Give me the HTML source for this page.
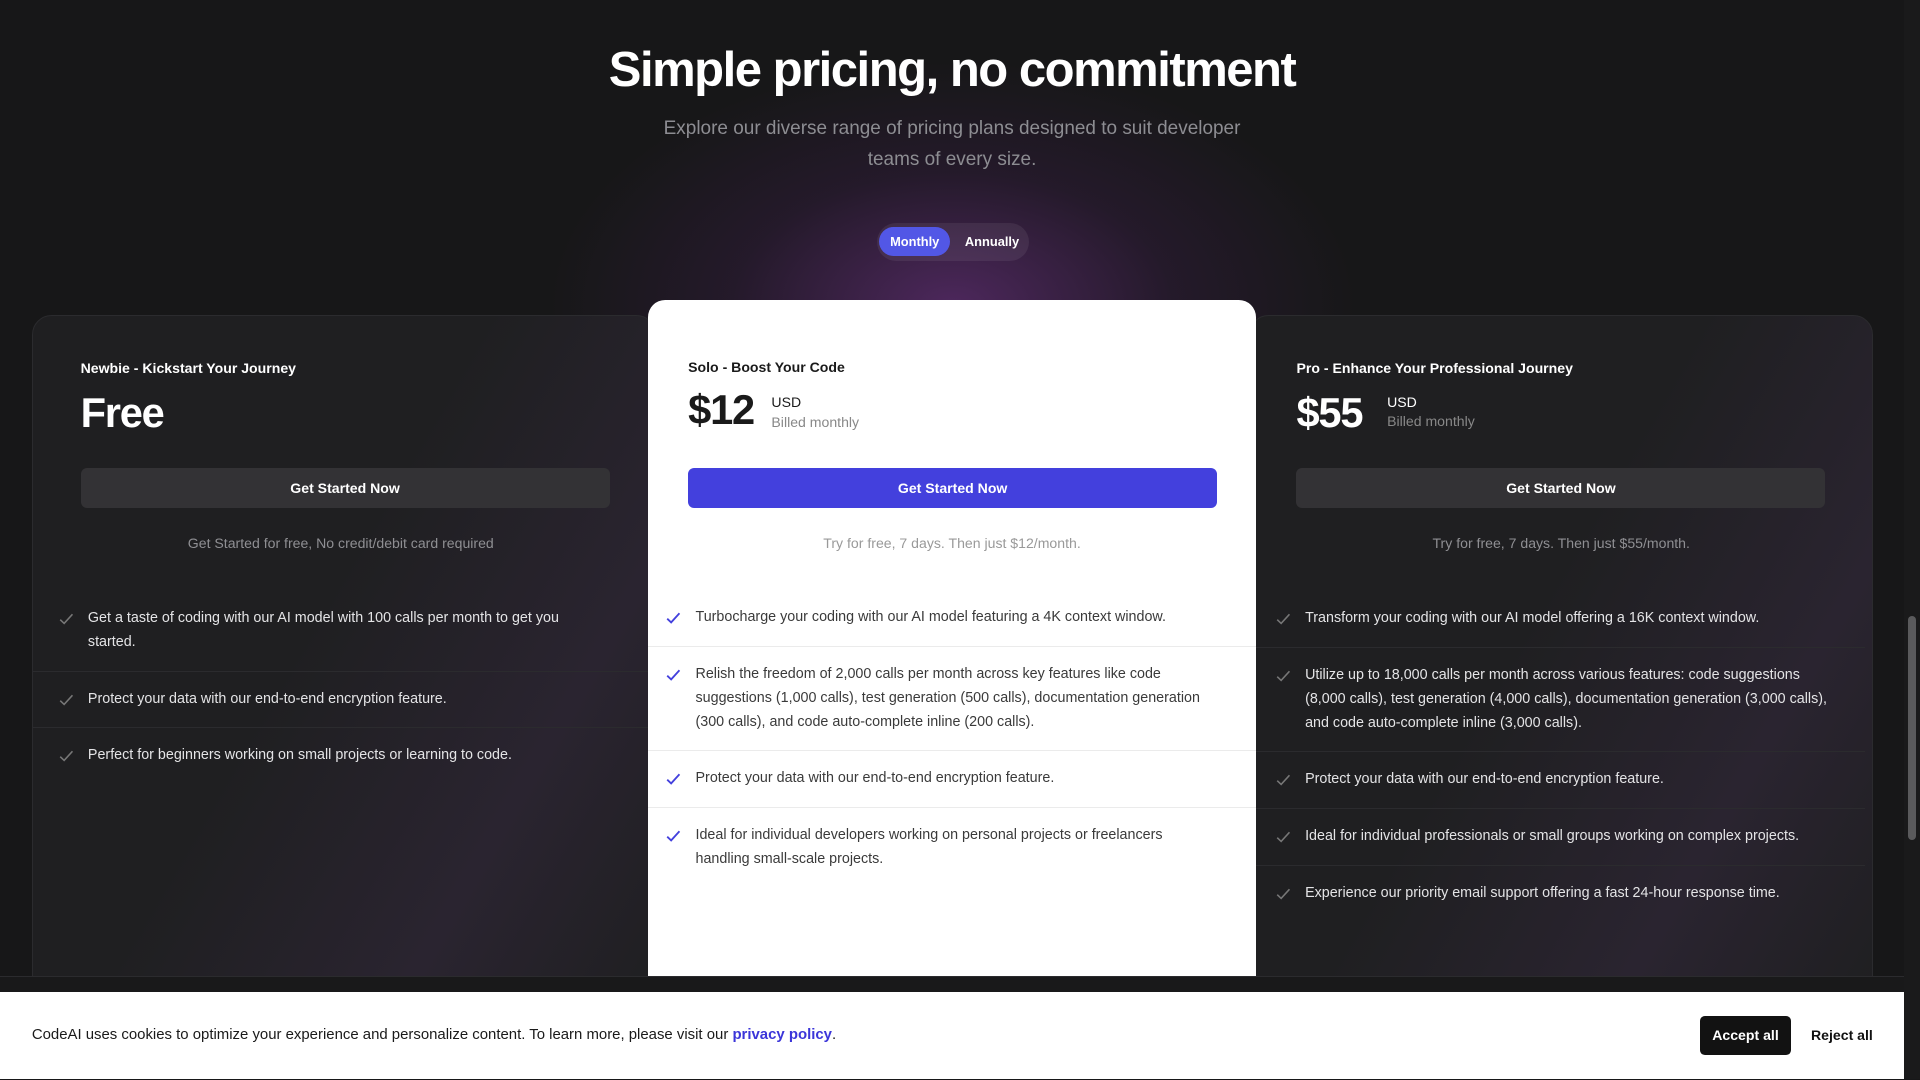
<!DOCTYPE html>
<html><head><meta charset="utf-8"><style>
*{box-sizing:border-box;margin:0;padding:0}
html,body{width:1920px;height:1080px;overflow:hidden;background:#171718}
#w{zoom:1.22449;width:1568px;height:881px;position:relative;font-family:"Liberation Sans",sans-serif;overflow:hidden;
background:radial-gradient(ellipse 330px 200px at 778px 250px,rgba(95,45,115,.75),rgba(60,30,75,.35) 55%,rgba(23,23,24,0) 100%),#171718}
h1{position:absolute;top:34px;left:0;width:1555px;text-align:center;color:#fff;font-size:40px;font-weight:700;letter-spacing:-1.2px}
.sub{position:absolute;top:92px;left:0;width:1555px;text-align:center;color:#8d8d92;font-size:15.5px;line-height:26px}
.tog{position:absolute;left:716px;top:182px;width:124px;height:31px;border-radius:16px;background:rgba(255,255,255,.07)}
.tog .m{position:absolute;left:2px;top:3px;width:58px;height:24px;border-radius:12px;background:#5257e6;color:#fff;font-size:10.5px;font-weight:700;text-align:center;line-height:24px}
.tog .a{position:absolute;left:72px;top:3px;color:#fff;font-size:10.5px;font-weight:700;line-height:24px}
.card{position:absolute;border-radius:16px;overflow:hidden}
.dark{background:linear-gradient(120deg,#1f1f21 0%,#1f1f21 45%,#2a2430 75%,#1f1f21 100%);border:1px solid #2b2b2e;top:257px;height:560px;color:#fff}
.white{background:#fff;top:245px;left:529px;width:497px;height:600px;color:#1a1a1a;border-radius:14px}
.pn{position:absolute;top:36px;left:36px;font-size:11.5px;font-weight:700}
.white .pn{top:48px;left:33px}
.price{position:absolute;left:36px;top:60px;font-size:34px;font-weight:700;letter-spacing:-1px}
.white .price{left:33px;top:70px}
.usd{position:absolute;left:101px;top:63px;font-size:11.5px;line-height:16px}
.usd span{color:#888}
.white .usd{top:76px}
.btn{position:absolute;left:36px;top:124px;width:432px;height:33px;border-radius:5px;background:#333235;color:#fff;font-size:11.5px;font-weight:700;text-align:center;line-height:33px}
.white .btn{left:33px;top:137px;background:#4340dd}
.note{position:absolute;left:0;width:100%;top:179px;text-align:center;color:#8f8f93;font-size:11.5px}
.white .note{top:192px;color:#999}
ul{position:absolute;left:0;width:100%;top:225px;list-style:none}
.white ul{top:237px}
li{position:relative;padding:13px 45px 13px 45px;font-size:11.7px;line-height:19.5px;border-bottom:1px solid #2b2b2e;color:#e4e4e6}
li:last-child{border-bottom:none}
.white li{border-color:#ebebeb;color:#3a3a3a;padding-left:39px;padding-right:26px}
li svg{position:absolute;left:21px;top:18px;width:12px;height:10px}
.white li svg{left:15px}
.cookie{position:absolute;left:0;top:810px;width:1555px;height:71px;background:#fff}
.strip{position:absolute;left:0;top:797px;width:1555px;height:13px;background:#19191a;border-top:1px solid #2b2b2e}
.ct{position:absolute;left:26px;top:28px;font-size:12.2px;color:#1a1a1a}
.ct a{color:#3b35d9;text-decoration:none;font-weight:700}
.acc{position:absolute;left:1388px;top:20px;width:75px;height:32px;background:#121212;color:#fff;border-radius:4px;font-size:11.5px;font-weight:700;text-align:center;line-height:32px}
.rej{position:absolute;left:1479px;top:20px;font-size:11.5px;font-weight:700;line-height:32px;color:#111}
.sb{position:absolute;left:1555px;top:0;width:13px;height:881px;background:#1a1a1b}
.sb div{position:absolute;left:3px;top:503px;width:7px;height:183px;border-radius:4px;background:#5a5a5c}
</style></head><body><div id="w">
<h1>Simple pricing, no commitment</h1>
<div class="sub">Explore our diverse range of pricing plans designed to suit developer<br>teams of every size.</div>
<div class="tog"><div class="m">Monthly</div><div class="a">Annually</div></div>

<div class="card dark" style="left:26px;width:510px">
<div class="pn" style="left:39px">Newbie - Kickstart Your Journey</div>
<div class="price" style="left:39px">Free</div>
<div class="btn" style="left:39px">Get Started Now</div>
<div class="note" style="width:503px">Get Started for free, No credit/debit card required</div>
<ul style="width:503px">
<li><svg viewBox="0 0 12 10"><path d="M1 5.5L4.2 8.5L11 1" fill="none" stroke="#777" stroke-width="1.3"/></svg>Get a taste of coding with our AI model with 100 calls per month to get you started.</li>
<li><svg viewBox="0 0 12 10"><path d="M1 5.5L4.2 8.5L11 1" fill="none" stroke="#777" stroke-width="1.3"/></svg>Protect your data with our end-to-end encryption feature.</li>
<li><svg viewBox="0 0 12 10"><path d="M1 5.5L4.2 8.5L11 1" fill="none" stroke="#777" stroke-width="1.3"/></svg>Perfect for beginners working on small projects or learning to code.</li>
</ul></div>

<div class="card dark" style="left:1020px;width:510px">
<div class="pn" style="left:38px">Pro - Enhance Your Professional Journey</div>
<div class="price" style="left:38px">$55</div>
<div class="usd" style="left:112px">USD<br><span>Billed monthly</span></div>
<div class="btn" style="left:38px">Get Started Now</div>
<div class="note" style="left:0">Try for free, 7 days. Then just $55/month.</div>
<ul style="left:0;width:502px">
<li style="padding-right:28px"><svg viewBox="0 0 12 10"><path d="M1 5.5L4.2 8.5L11 1" fill="none" stroke="#777" stroke-width="1.3"/></svg>Transform your coding with our AI model offering a 16K context window.</li>
<li style="padding-right:28px"><svg viewBox="0 0 12 10"><path d="M1 5.5L4.2 8.5L11 1" fill="none" stroke="#777" stroke-width="1.3"/></svg>Utilize up to 18,000 calls per month across various features: code suggestions (8,000 calls), test generation (4,000 calls), documentation generation (3,000 calls), and code auto-complete inline (3,000 calls).</li>
<li style="padding-right:28px"><svg viewBox="0 0 12 10"><path d="M1 5.5L4.2 8.5L11 1" fill="none" stroke="#777" stroke-width="1.3"/></svg>Protect your data with our end-to-end encryption feature.</li>
<li style="padding-right:28px"><svg viewBox="0 0 12 10"><path d="M1 5.5L4.2 8.5L11 1" fill="none" stroke="#777" stroke-width="1.3"/></svg>Ideal for individual professionals or small groups working on complex projects.</li>
<li style="padding-right:28px"><svg viewBox="0 0 12 10"><path d="M1 5.5L4.2 8.5L11 1" fill="none" stroke="#777" stroke-width="1.3"/></svg>Experience our priority email support offering a fast 24-hour response time.</li>
</ul></div>

<div class="card white">
<div class="pn">Solo - Boost Your Code</div>
<div class="price">$12</div>
<div class="usd">USD<br><span>Billed monthly</span></div>
<div class="btn">Get Started Now</div>
<div class="note">Try for free, 7 days. Then just $12/month.</div>
<ul>
<li><svg viewBox="0 0 12 10"><path d="M1 5.5L4.2 8.5L11 1" fill="none" stroke="#4340dd" stroke-width="1.5"/></svg>Turbocharge your coding with our AI model featuring a 4K context window.</li>
<li><svg viewBox="0 0 12 10"><path d="M1 5.5L4.2 8.5L11 1" fill="none" stroke="#4340dd" stroke-width="1.5"/></svg>Relish the freedom of 2,000 calls per month across key features like code suggestions (1,000 calls), test generation (500 calls), documentation generation (300 calls), and code auto-complete inline (200 calls).</li>
<li><svg viewBox="0 0 12 10"><path d="M1 5.5L4.2 8.5L11 1" fill="none" stroke="#4340dd" stroke-width="1.5"/></svg>Protect your data with our end-to-end encryption feature.</li>
<li style="padding-right:40px"><svg viewBox="0 0 12 10"><path d="M1 5.5L4.2 8.5L11 1" fill="none" stroke="#4340dd" stroke-width="1.5"/></svg>Ideal for individual developers working on personal projects or freelancers handling small-scale projects.</li>
</ul></div>

<div class="strip"></div>
<div class="cookie"><div class="ct">CodeAI uses cookies to optimize your experience and personalize content. To learn more, please visit our <a>privacy policy</a>.</div>
<div class="acc">Accept all</div><div class="rej">Reject all</div></div>
<div class="sb"><div></div></div>
</div></body></html>
